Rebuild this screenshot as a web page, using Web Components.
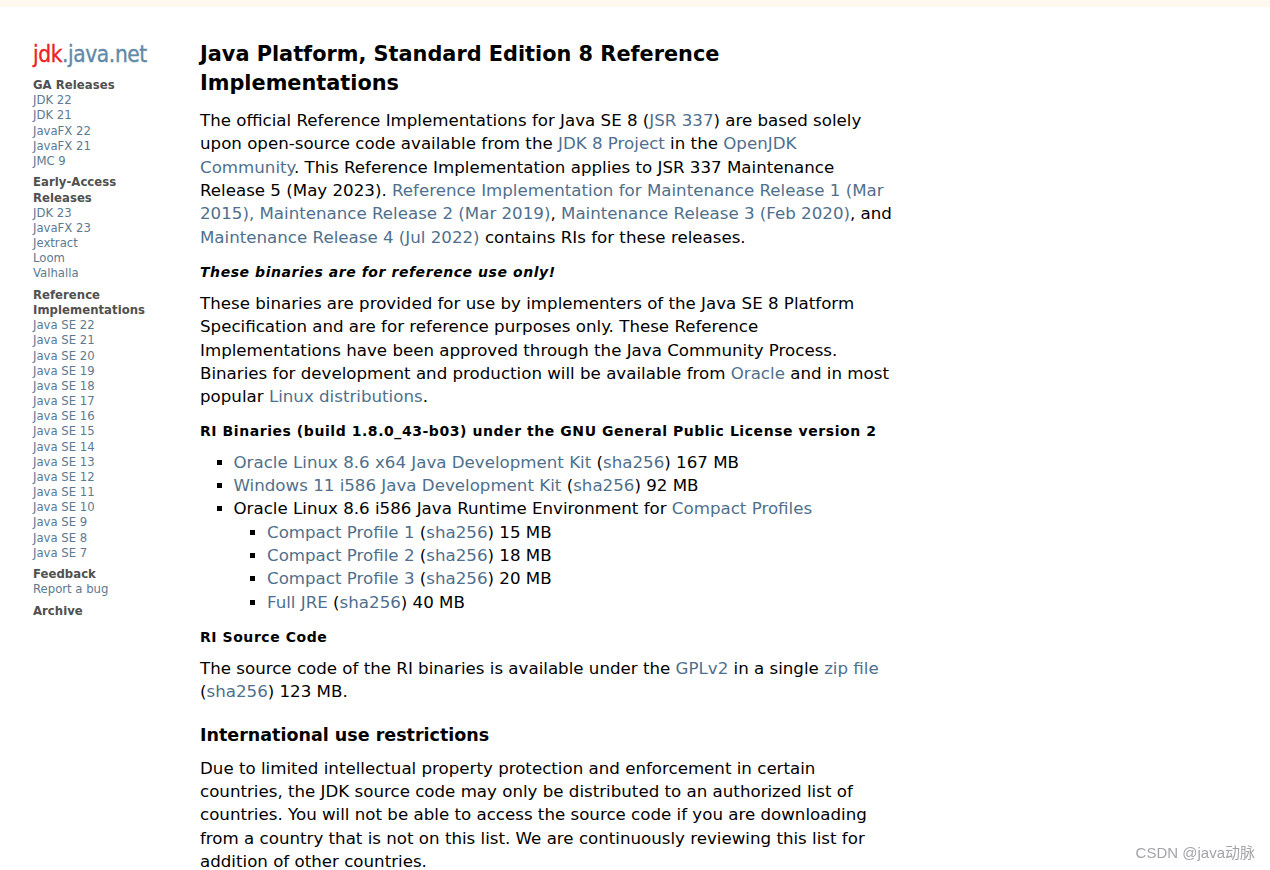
<!DOCTYPE html><html><head><meta charset="utf-8"><style>
html,body{margin:0;padding:0;background:#fff;overflow:hidden;height:870px}
body{font-family:"DejaVu Sans",sans-serif;color:#000}
</style></head><body>
<jdk-page>
<jdk-sidebar slot="side"></jdk-sidebar>
<jdk-content></jdk-content>
</jdk-page>
<csdn-mark></csdn-mark>
<script>
class JdkPage extends HTMLElement{constructor(){super();this.attachShadow({mode:'open'}).innerHTML=`<style>
:host{display:block;border-top:7px solid #fff8ee;}
.w{display:flex;align-items:flex-start}
</style><div class="w"><slot name="side"></slot><slot></slot></div>`}}
class JdkSidebar extends HTMLElement{constructor(){super();
const groups=[["GA Releases",["JDK 22","JDK 21","JavaFX 22","JavaFX 21","JMC 9"]],["Early-Access Releases",["JDK 23","JavaFX 23","Jextract","Loom","Valhalla"]],["Reference Implementations",["Java SE 22","Java SE 21","Java SE 20","Java SE 19","Java SE 18","Java SE 17","Java SE 16","Java SE 15","Java SE 14","Java SE 13","Java SE 12","Java SE 11","Java SE 10","Java SE 9","Java SE 8","Java SE 7"]],["Feedback",["Report a bug"]],["Archive",[]]];
this.attachShadow({mode:'open'}).innerHTML=`<style>
:host{display:block;width:200px;flex:none;box-sizing:border-box;padding:35px 40px 0 33px;font-size:11.67px;line-height:15.17px;color:#505050}
.logo{height:24px;font:22.5px/24px "DejaVu Sans Condensed","DejaVu Sans",sans-serif;-webkit-text-stroke:.35px currentColor;letter-spacing:-.4px;margin-bottom:12px;white-space:nowrap}
.r{color:#ee2222}.g{color:#5f8aa8}
.grp{margin-bottom:6.3px}
b{display:block;color:#505050;letter-spacing:.05px}
a{display:block;color:#5c7a92}
</style><div class="logo"><span class="r">jdk</span><span class="g">.java.net</span></div>`+groups.map(g=>`<div class="grp"><b>${g[0]}</b>${g[1].map(x=>`<a>${x}</a>`).join('')}</div>`).join('')}}
class JdkContent extends HTMLElement{constructor(){super();this.attachShadow({mode:'open'}).innerHTML=`<style>
:host{display:block;width:695px;flex:none;font-size:16.67px;line-height:23.33px;padding-top:33px}
a{color:#4f6f8c}
h1{font-size:20.83px;line-height:29px;margin:0 0 11px}
h2{font-size:17.5px;line-height:23px;margin:20px 0 10px}
h3{font-size:14px;letter-spacing:.56px;line-height:18px;margin:14px 0 11px}
p{margin:0}
ul{margin:0;padding:0 0 0 33.5px;list-style:square}
ul ul{margin:0}
.b2{margin-top:13px;margin-bottom:11px}
.b3{margin-top:14px;margin-bottom:11px}
i{font-style:italic}
</style>
<h1>Java Platform, Standard Edition 8 Reference Implementations</h1>
<p>The official Reference Implementations for Java SE 8 (<a>JSR 337</a>) are based solely upon open-source code available from the <a>JDK 8 Project</a> in the <a>OpenJDK Community</a>. This Reference Implementation applies to JSR 337 Maintenance Release 5 (May 2023). <a>Reference Implementation for Maintenance Release 1 (Mar 2015), Maintenance Release 2 (Mar 2019)</a>, <a>Maintenance Release 3 (Feb 2020)</a>, and <a>Maintenance Release 4 (Jul 2022)</a> contains RIs for these releases.</p>
<h3><i>These binaries are for reference use only!</i></h3>
<p>These binaries are provided for use by implementers of the Java SE 8 Platform Specification and are for reference purposes only. These Reference Implementations have been approved through the Java Community Process. Binaries for development and production will be available from <a>Oracle</a> and in most popular <a>Linux distributions</a>.</p>
<h3 class="b2">RI Binaries (build 1.8.0_43-b03) under the GNU General Public License version 2</h3>
<ul><li><a>Oracle Linux 8.6 x64 Java Development Kit</a> (<a>sha256</a>) 167 MB</li>
<li><a>Windows 11 i586 Java Development Kit</a> (<a>sha256</a>) 92 MB</li>
<li>Oracle Linux 8.6 i586 Java Runtime Environment for <a>Compact Profiles</a>
<ul><li><a>Compact Profile 1</a> (<a>sha256</a>) 15 MB</li><li><a>Compact Profile 2</a> (<a>sha256</a>) 18 MB</li><li><a>Compact Profile 3</a> (<a>sha256</a>) 20 MB</li><li><a>Full JRE</a> (<a>sha256</a>) 40 MB</li></ul></li></ul>
<h3 class="b3">RI Source Code</h3>
<p>The source code of the RI binaries is available under the <a>GPLv2</a> in a single <a>zip file</a> (<a>sha256</a>) 123 MB.</p>
<h2>International use restrictions</h2>
<p>Due to limited intellectual property protection and enforcement in certain countries, the JDK source code may only be distributed to an authorized list of countries. You will not be able to access the source code if you are downloading from a country that is not on this list. We are continuously reviewing this list for addition of other countries.</p>`}}
class CsdnMark extends HTMLElement{constructor(){super();this.attachShadow({mode:'open'}).innerHTML=`<style>
:host{display:block;position:fixed;right:15px;top:844px;font:15px/18px "Liberation Sans","Noto Sans CJK SC",sans-serif;color:#a4a4a8}
</style>CSDN @java动脉`}}
customElements.define('jdk-page',JdkPage);customElements.define('jdk-sidebar',JdkSidebar);customElements.define('jdk-content',JdkContent);customElements.define('csdn-mark',CsdnMark);
</script></body></html>
